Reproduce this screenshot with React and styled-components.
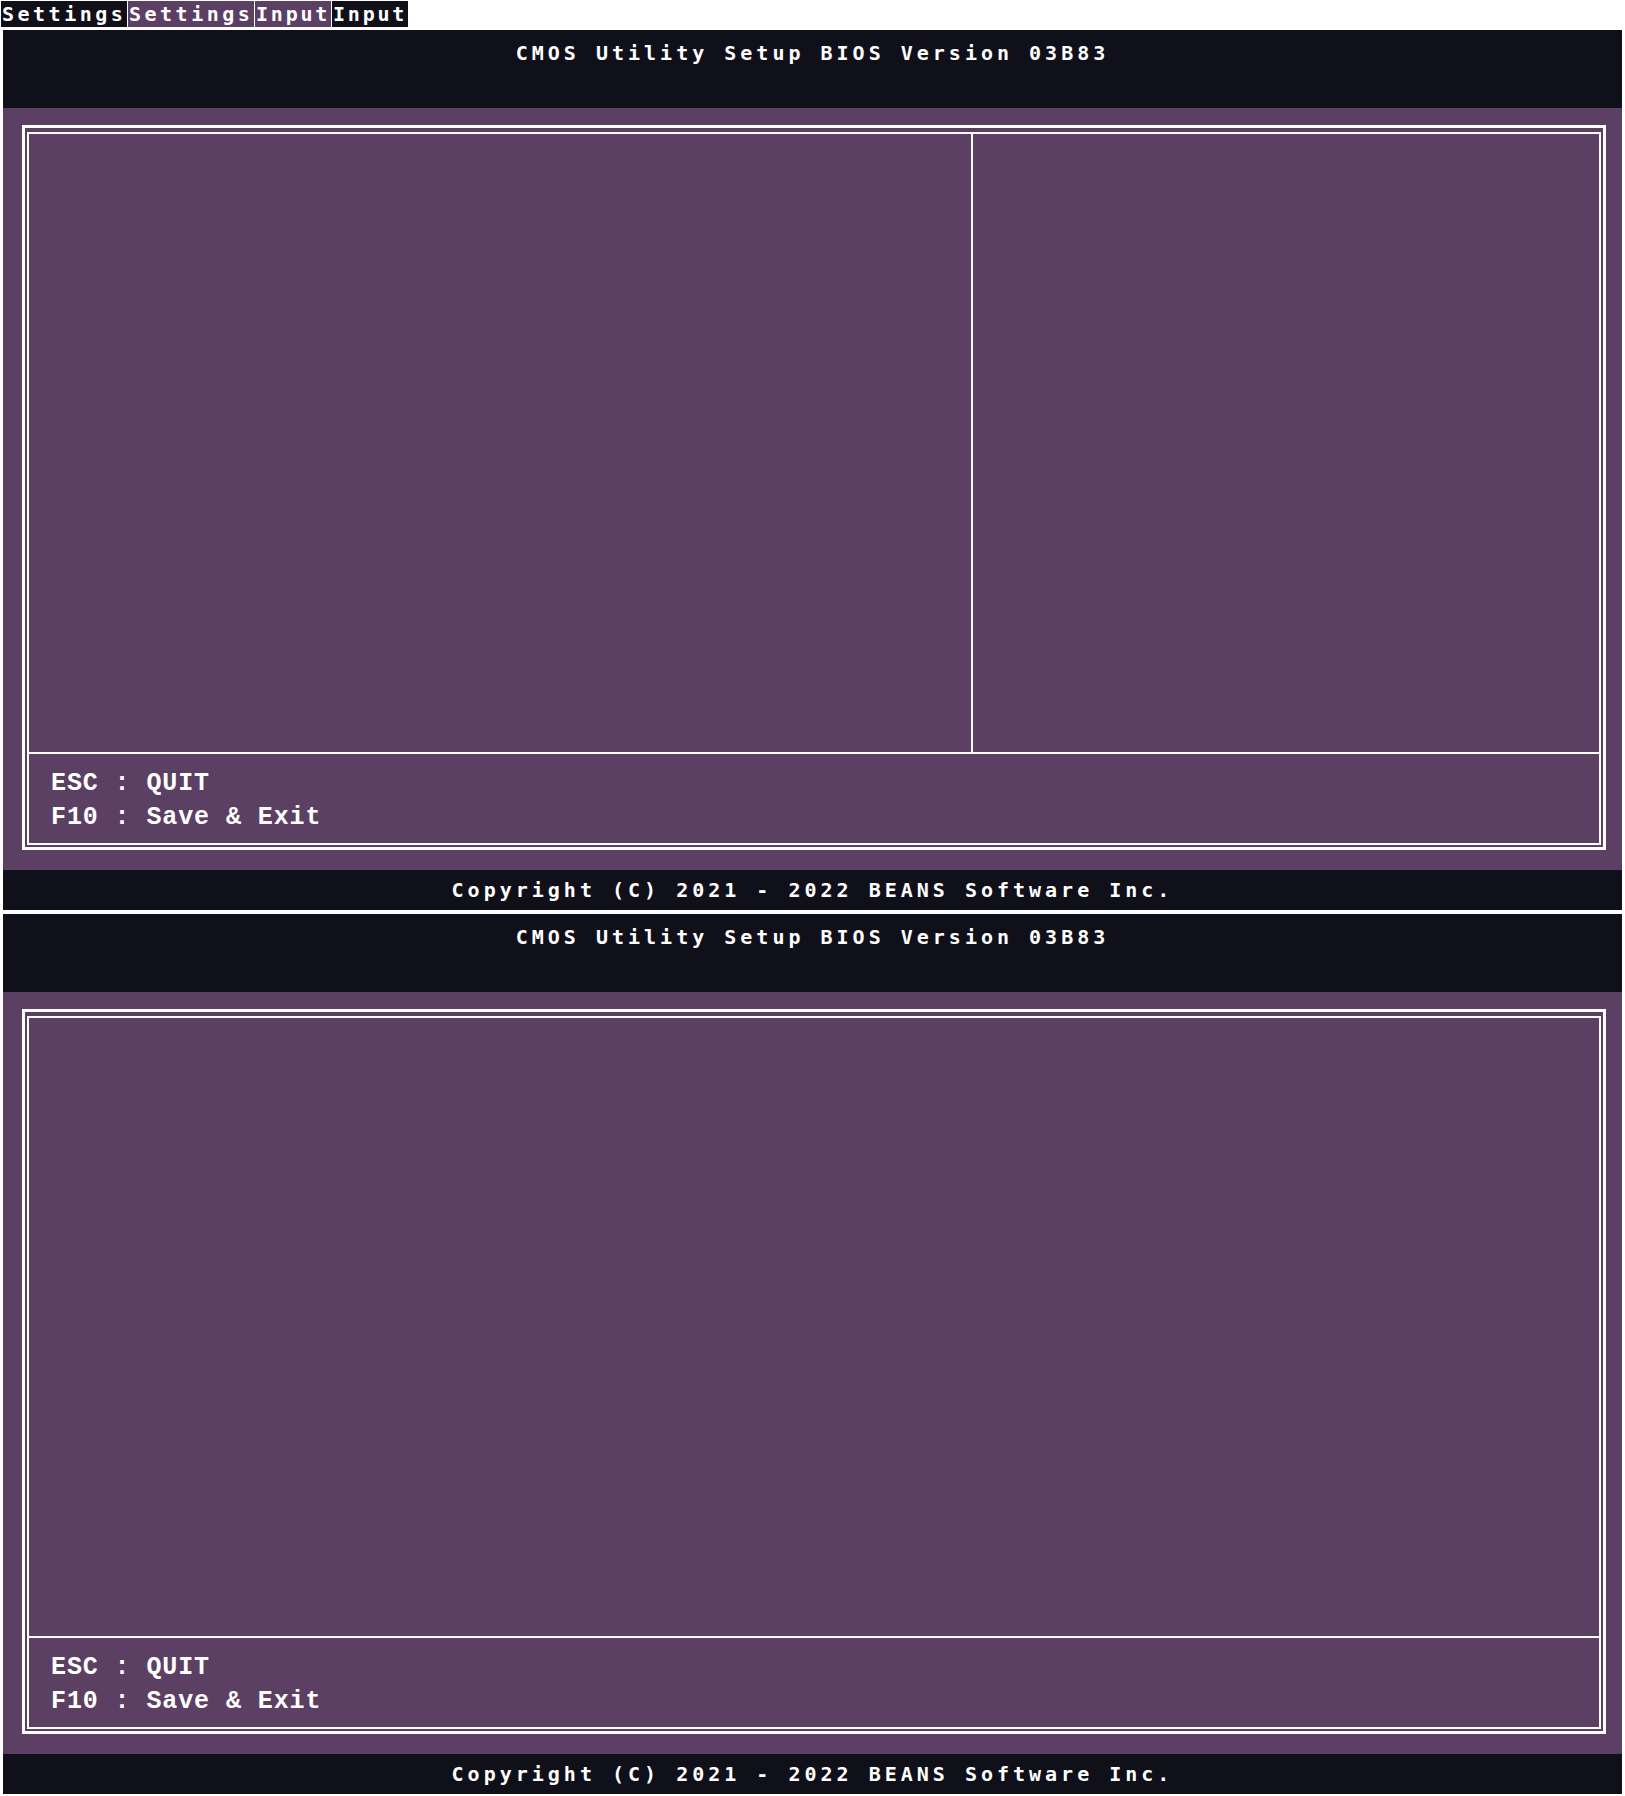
import styled, { createGlobalStyle } from 'styled-components';

const GlobalStyle = createGlobalStyle`
  * { box-sizing: border-box; }
  html, body {
    margin: 0;
    padding: 0;
    background: #ffffff;
  }
  body {
    font-family: "DejaVu Sans Mono", "Liberation Mono", monospace;
  }
`;

const DARK = '#10101a';
const PURPLE = '#5b4063';

const Page = styled.div`
  display: flex;
  flex-direction: column;
  width: 1625px;
`;

const TabBar = styled.div`
  display: flex;
  gap: 1px;
  margin: 1px 0 3px 1px;
  height: 26px;
`;

const Tab = styled.div`
  width: ${p => p.$w}px;
  height: 26px;
  line-height: 26px;
  background: ${p => (p.$dark ? DARK : PURPLE)};
  color: #ffffff;
  font-family: "DejaVu Sans Mono", monospace;
  font-weight: bold;
  font-size: 20px;
  letter-spacing: ${p => p.$ls}px;
  padding-left: 1px;
  white-space: nowrap;
`;

const Screens = styled.div`
  display: flex;
  flex-direction: column;
  gap: 4px;
  margin: 0 3px;
`;

const ScreenBox = styled.section`
  display: flex;
  flex-direction: column;
  height: 880px;
  background: ${PURPLE};
`;

const Header = styled.header`
  height: 78px;
  background: ${DARK};
  color: #ffffff;
  text-align: center;
  padding-top: 11px;
  font-family: "DejaVu Sans Mono", monospace;
  font-weight: bold;
  font-size: 20px;
  letter-spacing: 4px;
  white-space: nowrap;
`;

const Body = styled.main`
  flex: 1;
  display: flex;
  padding: 17px 16px 20px 19px;
`;

const Frame = styled.div`
  flex: 1;
  display: flex;
  border: 3px solid #ffffff;
  padding: 4px 2px 2px 2px;
`;

const Inner = styled.div`
  flex: 1;
  display: flex;
  flex-direction: column;
  border: 2px solid #ffffff;
`;

const Panes = styled.div`
  flex: 1;
  display: grid;
  grid-template-columns: ${p => (p.$split ? '944px 1fr' : '1fr')};
  border-bottom: 2px solid #ffffff;
`;

const Pane = styled.div`
  border-right: ${p => (p.$divider ? '2px solid #ffffff' : 'none')};
`;

const Keys = styled.div`
  height: 89px;
  padding: 13px 0 0 22px;
  color: #ffffff;
  font-family: "Liberation Mono", "Courier New", monospace;
  font-weight: bold;
  font-size: 25px;
  line-height: 34px;
  letter-spacing: 0.9px;
  white-space: pre;
`;

const Footer = styled.footer`
  height: 40px;
  line-height: 40px;
  background: ${DARK};
  color: #ffffff;
  text-align: center;
  font-family: "DejaVu Sans Mono", monospace;
  font-weight: bold;
  font-size: 20px;
  letter-spacing: 4px;
  white-space: nowrap;
`;

const Screen = ({ split }) => (
  <ScreenBox>
    <Header>CMOS Utility Setup BIOS Version 03B83</Header>
    <Body>
      <Frame>
        <Inner>
          <Panes $split={split}>
            {split ? (
              <>
                <Pane $divider />
                <Pane />
              </>
            ) : (
              <Pane />
            )}
          </Panes>
          <Keys>
            <div>ESC : QUIT</div>
            <div>F10 : Save &amp; Exit</div>
          </Keys>
        </Inner>
      </Frame>
    </Body>
    <Footer>Copyright (C) 2021 - 2022 BEANS Software Inc.</Footer>
  </ScreenBox>
);

export default function App() {
  return (
    <Page>
      <GlobalStyle />
      <TabBar>
        <Tab $dark $w={126} $ls={3.5}>Settings</Tab>
        <Tab $w={126} $ls={3.5}>Settings</Tab>
        <Tab $w={76} $ls={2.8}>Input</Tab>
        <Tab $dark $w={76} $ls={2.8}>Input</Tab>
      </TabBar>
      <Screens>
        <Screen split />
        <Screen />
      </Screens>
    </Page>
  );
}
